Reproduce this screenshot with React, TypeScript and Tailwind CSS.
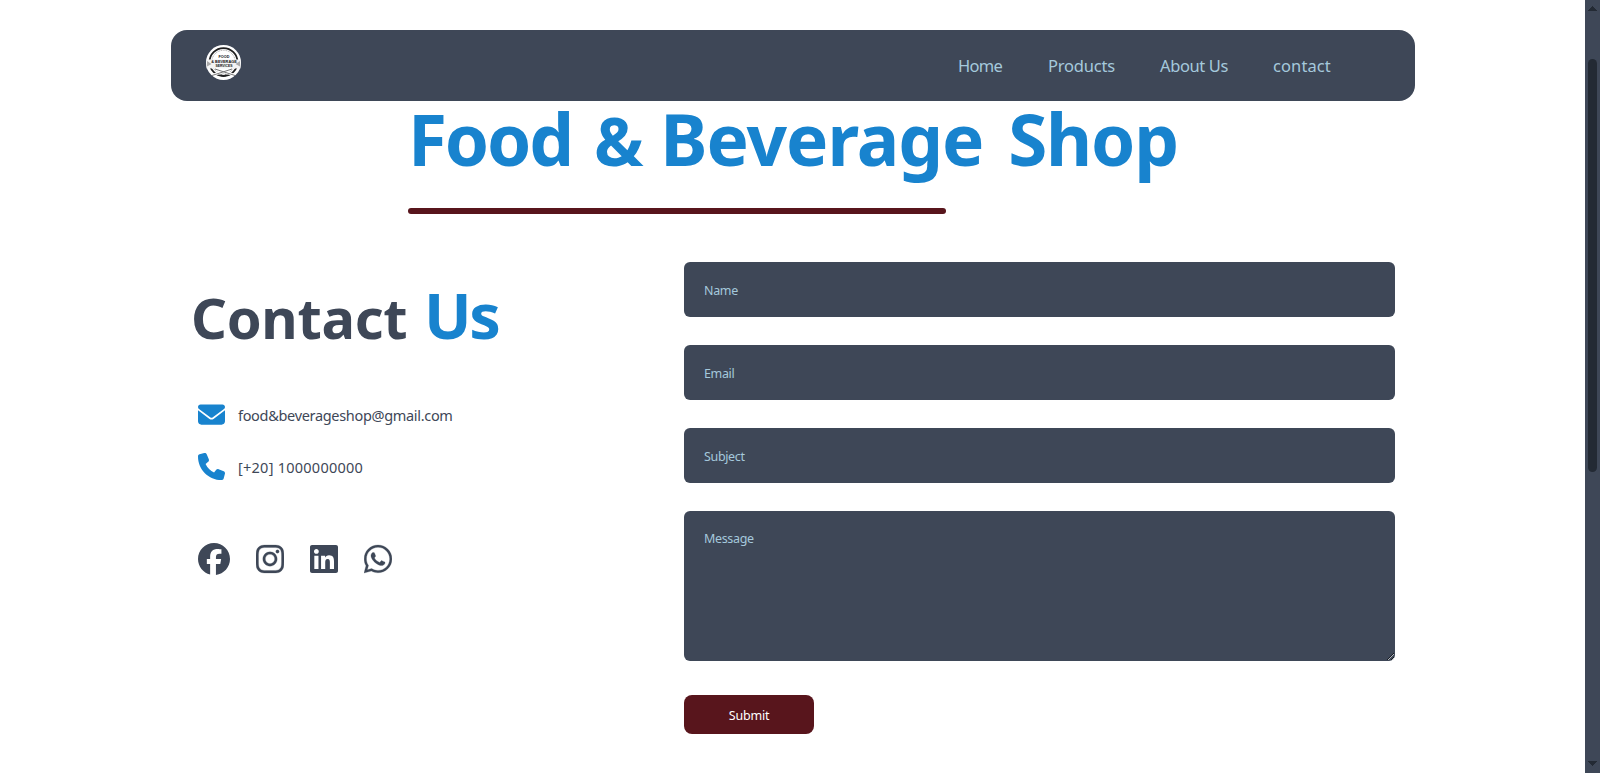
import React from "react";
import { FaEnvelope, FaFacebook, FaInstagram, FaLinkedin, FaPhone, FaWhatsapp } from "react-icons/fa6";

const field =
  "block w-full rounded-md bg-[#3e4757] px-5 text-[12.5px] tracking-[-0.35px] text-[#a5c9dc] placeholder:text-[#a5c9dc] placeholder:opacity-100 outline-none";

function Logo() {
  return (
    <svg viewBox="0 0 70 70" className="size-[35px]">
      <circle cx="35" cy="35" r="35" fill="#fff" />
      <circle cx="35" cy="34" r="28" fill="#fff" stroke="#202020" strokeWidth="3.5" />
      <circle cx="35" cy="34" r="23.5" fill="none" stroke="#8a8a8a" strokeWidth="1.5" strokeDasharray="2 1.5" />
      <path d="M1 29h68v18H1z" fill="#f4f4f4" />
      <path d="M2 32l9 6-9 5zM68 32l-9 6 9 5z" fill="#aaa" />
      <g fill="#111" fontFamily="Liberation Sans" fontWeight="700" textAnchor="middle">
        <text x="36" y="26" fontSize="7.5">FOOD</text>
        <text x="36" y="35.5" fontSize="7" textLength="51" lengthAdjust="spacingAndGlyphs">&amp; BEVERAGE</text>
        <text x="36" y="44.5" fontSize="7" textLength="34" lengthAdjust="spacingAndGlyphs">SERVICES</text>
      </g>
      <path d="M14 60L50 48M56 60L20 48" stroke="#fff" strokeWidth="5" />
      <path d="M12 61L52 48M58 61L18 48" stroke="#777" strokeWidth="2" />
      <path d="M29 60q6 3 12 0" stroke="#222" strokeWidth="3" fill="none" />
    </svg>
  );
}

function Navbar() {
  return (
    <nav className="flex h-[71px] w-[1244px] items-center justify-between rounded-2xl bg-[#3e4757] pl-[35px] pr-[84px]">
      <div className="pb-1.5">
        <Logo />
      </div>
      <ul className="flex gap-[45px] text-[16.5px] leading-6 text-[#a5c9dc]">
        <li className="w-[45px] whitespace-nowrap tracking-[-0.7px]">Home</li>
        <li className="w-[67px] whitespace-nowrap tracking-[-0.2px]">Products</li>
        <li className="w-[68px] whitespace-nowrap tracking-[-0.4px]">About Us</li>
        <li className="w-[58px] whitespace-nowrap tracking-[0.1px]">contact</li>
      </ul>
    </nav>
  );
}

function Scrollbar() {
  return (
    <div className="flex h-full w-[15px] flex-col items-center bg-[#3e4757]">
      <svg viewBox="0 0 15 15" className="h-[15px] w-[15px]" shapeRendering="crispEdges">
        <path d="M3 11L7.5 6L12 11z" fill="#232a34" />
      </svg>
      <div className="mt-11 h-[413px] w-[9px] rounded-full bg-[#232a34]" />
      <svg viewBox="0 0 15 15" className="mt-auto h-[15px] w-[15px]" shapeRendering="crispEdges">
        <path d="M3 3L7.5 8L12 3z" fill="#232a34" />
      </svg>
    </div>
  );
}

export default function App() {
  return (
    <div className="flex h-[773px] w-[1600px] overflow-hidden bg-white font-['Noto_Sans','Open_Sans',sans-serif] text-[#3e4757]">
      <main className="flex-1 pl-[171px] pt-[30px]">
        <Navbar />
        <header className="pl-[237px]">
          <h1 className="h-[107px] whitespace-nowrap pt-px text-[71px] font-bold leading-[74px] tracking-[-0.82px] text-[#1883ce]">
            <span className="mr-[4.5px] tracking-[-2.2px]">Food</span>{" "}
            <span className="text-[66px]">&amp;</span>{" "}
            <span className="mr-[7px] tracking-[-1px]">Beverage</span>{" "}
            <span className="tracking-[-1.2px]">Shop</span>
          </h1>
          <div className="h-1.5 w-[538px] rounded-full bg-[#58151c]" />
        </header>
        <div className="flex pt-12">
          <section className="w-[513px] pl-5 pt-[17px]">
            <h2 className="flex h-[72px] items-baseline whitespace-nowrap text-[56px] font-bold leading-[71px]">
              <span className="w-[233px] tracking-[-0.3px]">Contact</span>
              <span className="text-[63px] tracking-[-2.5px] text-[#1883ce]">Us</span>
            </h2>
            <ul className="pl-[7px] pt-[37px] text-[14.5px]">
              <li className="flex h-[52px] items-center gap-[13px]">
                <FaEnvelope className="size-[27px] text-[#1883ce]" />
                <span className="pt-[3px] tracking-[-0.32px]">food&amp;beverageshop@gmail.com</span>
              </li>
              <li className="flex h-[52px] items-center gap-[13px]">
                <FaPhone className="size-[27px] text-[#1883ce]" />
                <span className="pt-[3px] tracking-[0.25px]">[+20] 1000000000</span>
              </li>
            </ul>
            <div className="flex items-center gap-[26px] pl-[7px] pt-[51px]">
              <FaFacebook className="size-8" />
              <FaInstagram className="h-8 w-7" stroke="currentColor" strokeWidth="4" />
              <FaLinkedin className="h-8 w-7" />
              <FaWhatsapp className="h-8 w-7" stroke="currentColor" strokeWidth="4" />
            </div>
          </section>
          <form className="w-[711px]" onSubmit={(e) => e.preventDefault()}>
            <div className="flex flex-col gap-7">
              <input className={`${field} h-[55px] pt-0.5`} placeholder="Name" />
              <input className={`${field} h-[55px] pt-0.5`} placeholder="Email" />
              <input className={`${field} h-[55px] pt-0.5`} placeholder="Subject" />
              <textarea className={`${field} h-[150px] resize pt-[19px]`} placeholder="Message" />
            </div>
            <button className="mt-[34px] h-[39px] w-[130px] rounded-lg bg-[#58151c] pt-[3px] text-[12.5px] tracking-[-0.2px] text-white">Submit</button>
          </form>
        </div>
      </main>
      <Scrollbar />
    </div>
  );
}
